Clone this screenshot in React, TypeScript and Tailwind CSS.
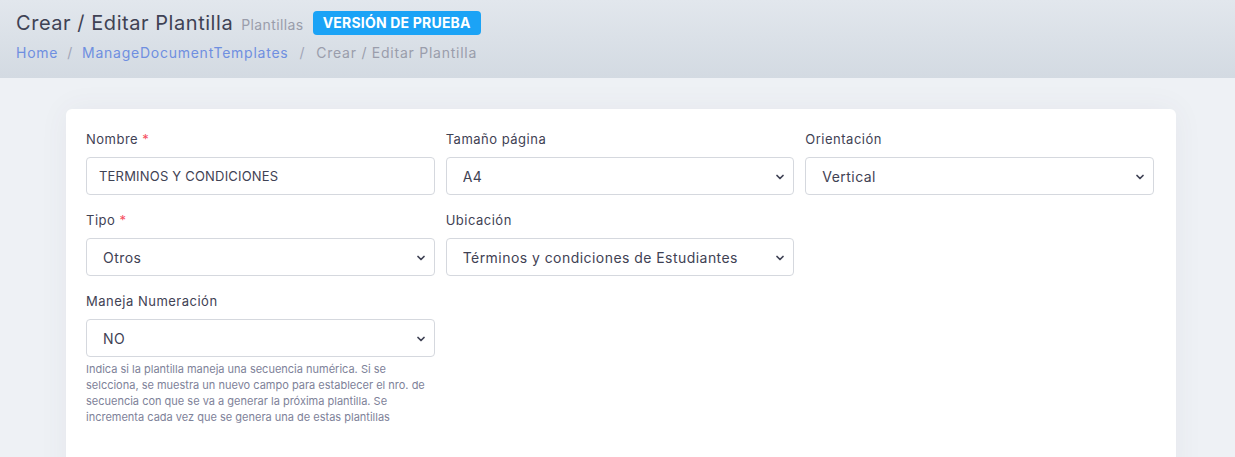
import { ChevronDown } from 'lucide-react';

const font = { fontFamily: 'Inter, "Open Sans", sans-serif' };

function Label({ text, required }: { text: string; required?: boolean }) {
  return (
    <label className="block text-[13px] leading-[20px] tracking-[0.5px] text-[#3f4254] mb-[8px]">
      {text}
      {required && <span className="text-[#f64e60]"> *</span>}
    </label>
  );
}

function Select({ value }: { value: string }) {
  return (
    <div className="relative">
      <select
        className="w-full h-[38px] appearance-none rounded-[4px] border border-[#d5d8de] bg-white pl-[16px] pr-8 text-[14px] tracking-[0.45px] text-[#3f4254] outline-none"
        defaultValue={value}
      >
        <option>{value}</option>
      </select>
      <ChevronDown
        className="absolute right-[8px] top-[14px] w-[12px] h-[12px] text-[#3f4254] pointer-events-none"
        strokeWidth={3.5}
      />
    </div>
  );
}

export default function App() {
  return (
    <div className="h-[457px] overflow-hidden bg-[#eef1f5]" style={font}>
      {/* Subheader */}
      <div className="h-[78px] bg-gradient-to-b from-[#e2e7ed] to-[#d3dae2] px-[16px] pt-[10px]">
        <div className="flex items-center">
          <h1 className="text-[20px] leading-[26px] tracking-[0.55px] text-[#3f4254]">Crear / Editar Plantilla</h1>
          <span className="ml-[8px] mt-[2px] text-[14px] tracking-[0.4px] text-[#9a9dab]">Plantillas</span>
          <span className="ml-[9px] rounded-[4px] bg-[#1ba3f6] px-[10px] py-[2px] text-[14px] leading-[20px] tracking-[0.2px] font-bold text-white">
            VERSIÓN DE PRUEBA
          </span>
        </div>
        <div className="mt-[7px] flex items-center text-[14px] leading-[20px] tracking-[0.75px]">
          <span className="text-[#6f8fe0]">Home</span>
          <span className="mx-[9px] text-[#a1a5b7]">/</span>
          <span className="text-[#6f8fe0]">ManageDocumentTemplates</span>
          <span className="mx-[11px] text-[#a1a5b7]">/</span>
          <span className="text-[#9a9dab]">Crear / Editar Plantilla</span>
        </div>
      </div>

      {/* Card */}
      <div className="pl-[66px] pr-[59px] pt-[31px]">
        <div className="rounded-[6px] bg-white pl-[20px] pr-[22px] pt-[20px] pb-[60px] shadow-[0_0_30px_rgba(82,63,105,0.06)]">
          <div className="grid grid-cols-3 gap-x-[11px] gap-y-[15px]">
            <div>
              <Label text="Nombre" required />
              <input
                className="w-full h-[38px] rounded-[4px] border border-[#d5d8de] bg-white px-[12px] text-[13px] tracking-[0.2px] text-[#3f4254] outline-none"
                defaultValue="TERMINOS Y CONDICIONES"
              />
            </div>
            <div>
              <Label text="Tamaño página" />
              <Select value="A4" />
            </div>
            <div>
              <Label text="Orientación" />
              <Select value="Vertical" />
            </div>
            <div>
              <Label text="Tipo" required />
              <Select value="Otros" />
            </div>
            <div>
              <Label text="Ubicación" />
              <Select value="Términos y condiciones de Estudiantes" />
            </div>
            <div />
            <div>
              <Label text="Maneja Numeración" />
              <Select value="NO" />
              <p className="mt-[4px] text-[11px] leading-[16px] text-[#7e8299]">
                Indica si la plantilla maneja una secuencia numérica. Si se
                <br />
                selcciona, se muestra un nuevo campo para establecer el nro. de
                <br />
                secuencia con que se va a generar la próxima plantilla. Se
                <br />
                incrementa cada vez que se genera una de estas plantillas
              </p>
            </div>
          </div>
        </div>
      </div>
    </div>
  );
}
